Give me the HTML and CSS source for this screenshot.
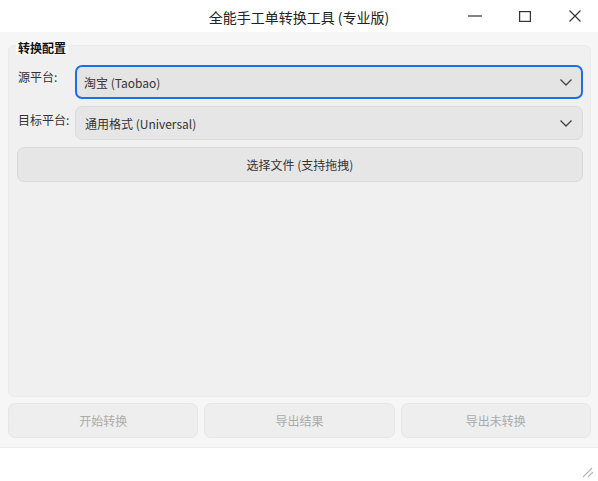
FILE: index.html
```html
<!DOCTYPE html>
<html lang="zh">
<head>
<meta charset="utf-8">
<title>全能手工单转换工具 (专业版)</title>
<link rel="stylesheet" href="styles.css">
</head>
<body>
<div class="window">
  <div class="titlebar">
    <div></div>
    <div class="title">全能手工单转换工具 (专业版)</div>
    <div class="controls">
      <span class="ctl"><svg width="14" height="2" viewBox="0 0 14 2"><path d="M0 1H14" stroke="#333" stroke-width="1.2"/></svg></span>
      <span class="ctl"><svg width="12" height="11" viewBox="0 0 12 11"><rect x="0.6" y="0.6" width="10.8" height="9.8" fill="none" stroke="#333" stroke-width="1.2"/></svg></span>
      <span class="ctl"><svg width="12" height="12" viewBox="0 0 12 12"><path d="M0.5 0.5L11.5 11.5M11.5 0.5L0.5 11.5" stroke="#333" stroke-width="1.2"/></svg></span>
    </div>
  </div>
  <div class="main">
    <div class="group">
      <div class="legend">转换配置</div>
      <div class="form">
        <div class="label l1">源平台:</div>
        <div class="combo focused">
          <span>淘宝 (Taobao)</span>
          <svg class="chev" width="12" height="7" viewBox="0 0 12 7"><path d="M0.5 0.5L6 6L11.5 0.5" fill="none" stroke="#444" stroke-width="1.3"/></svg>
        </div>
        <div class="label l2">目标平台:</div>
        <div class="combo">
          <span>通用格式 (Universal)</span>
          <svg class="chev" width="12" height="7" viewBox="0 0 12 7"><path d="M0.5 0.5L6 6L11.5 0.5" fill="none" stroke="#444" stroke-width="1.3"/></svg>
        </div>
      </div>
      <div class="filebtn">选择文件 (支持拖拽)</div>
    </div>
    <div class="actions">
      <div class="btn">开始转换</div>
      <div class="btn">导出结果</div>
      <div class="btn">导出未转换</div>
    </div>
  </div>
  <div class="statusbar">
    <svg class="grip" width="12" height="13" viewBox="0 0 12 13"><path d="M1 12L10 3M6 12L11 7" stroke="#b8b8b8" stroke-width="1.1" fill="none"/></svg>
  </div>
</div>
</body>
</html>
```
FILE: styles.css
```css
* { box-sizing: border-box; }
html, body { margin: 0; padding: 0; }
body {
  width: 598px;
  height: 481px;
  overflow: hidden;
  font-family: "Noto Sans CJK SC", "Noto Sans", sans-serif;
  font-size: 12px;
  color: #333;
  background: #fff;
}
.window {
  width: 598px;
  height: 481px;
  display: flex;
  flex-direction: column;
}
.titlebar {
  height: 32px;
  flex: none;
  background: #fff;
  display: grid;
  grid-template-columns: 1fr auto 1fr;
  align-items: center;
}
.title {
  font-size: 14px;
  color: #222;
  line-height: 18px;
  padding-top: 1px;
}
.controls {
  justify-self: end;
  display: flex;
  height: 32px;
  margin-right: -2px;
}
.ctl {
  width: 50px;
  height: 32px;
  display: flex;
  align-items: center;
  justify-content: center;
}
.main {
  flex: none;
  height: 415px;
  background: #f6f6f6;
  padding: 13px 7px 9px 8px;
  display: flex;
  flex-direction: column;
  gap: 6px;
}
.group {
  position: relative;
  flex: 1;
  background: #f0f0f0;
  border: 1px solid #ebebeb;
  border-radius: 6px;
  padding: 19px 7px 0 8px;
  display: flex;
  flex-direction: column;
  gap: 7px;
}
.legend {
  position: absolute;
  top: -5px;
  left: 7px;
  padding: 0 2px;
  height: 14px;
  line-height: 13px;
  background: #f9f9f9;
  font-weight: bold;
  color: #111;
}
.form {
  display: grid;
  grid-template-columns: 57px 1fr;
  row-gap: 7px;
  padding-left: 1px;
}
.label {
  line-height: 16px;
  color: #333;
}
.l1 { padding-top: 4px; }
.l2 { padding-top: 6px; }
.combo {
  height: 34px;
  background: #e6e6e6;
  border: 1px solid #dcdcdc;
  border-radius: 7px;
  display: flex;
  align-items: center;
  justify-content: space-between;
  padding: 0 10px 0 9px;
  color: #333;
}
.combo.focused {
  border: 2px solid #1c6fe4;
  background: #e4e4e4;
  padding: 0 9px 0 7px;
}
.filebtn {
  height: 35px;
  background: #e6e6e6;
  border: 1px solid #dadada;
  border-radius: 7px;
  display: flex;
  align-items: center;
  justify-content: center;
  color: #333;
}
.actions {
  flex: none;
  display: grid;
  grid-template-columns: 1fr 1fr 1fr;
  gap: 6px;
  height: 35px;
}
.btn {
  background: #eeeeee;
  border: 1px solid #e6e6e6;
  border-radius: 7px;
  display: flex;
  align-items: center;
  justify-content: center;
  color: #ababab;
}
.statusbar {
  flex: 1;
  background: #fff;
  border-top: 1px solid #ececec;
  display: flex;
  justify-content: flex-end;
  align-items: flex-end;
  padding: 0 4px 3px 0;
}
```
